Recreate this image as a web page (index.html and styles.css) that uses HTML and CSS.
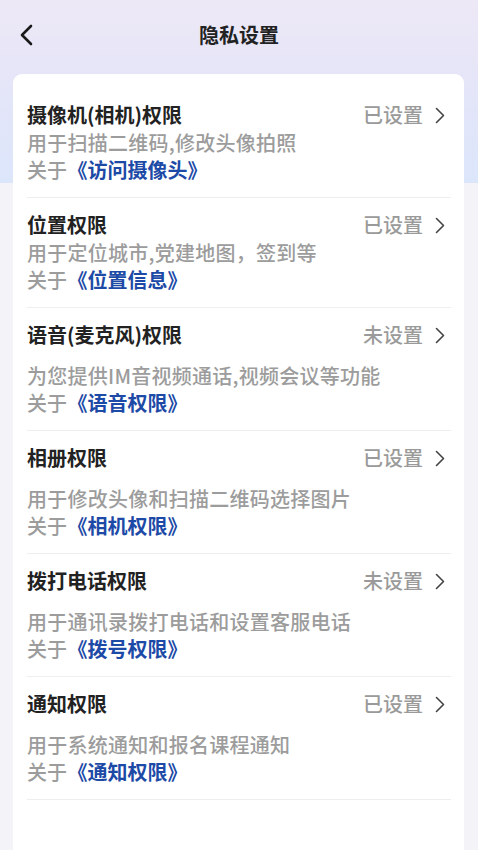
FILE: index.html
```html
<!DOCTYPE html>
<html lang="zh">
<head>
<meta charset="utf-8">
<link rel="stylesheet" href="styles.css">
</head>
<body>
<div class="page">
  <div class="topbg"></div>
  <header class="nav">
    <span class="back"><svg width="14" height="22" viewBox="0 0 14 22"><path d="M12 2 L3 11 L12 20" fill="none" stroke="#1a1a1a" stroke-width="2.6" stroke-linecap="round" stroke-linejoin="round"/></svg></span>
    <h1 class="nav-title">隐私设置</h1>
  </header>
  <main class="card">
    <div class="row">
      <div class="row-head"><span class="title">摄像机(相机)权限</span><span class="status">已设置<svg class="chev" width="10" height="17" viewBox="0 0 10 17"><path d="M1.5 1.5 L8.5 8.5 L1.5 15.5" fill="none" stroke="#444" stroke-width="1.6" stroke-linecap="round" stroke-linejoin="round"/></svg></span></div>
      <div class="desc">用于扫描二维码,修改头像拍照</div>
      <div class="about">关于 <span class="link">《访问摄像头》</span></div>
    </div>
    <div class="row">
      <div class="row-head"><span class="title">位置权限</span><span class="status">已设置<svg class="chev" width="10" height="17" viewBox="0 0 10 17"><path d="M1.5 1.5 L8.5 8.5 L1.5 15.5" fill="none" stroke="#444" stroke-width="1.6" stroke-linecap="round" stroke-linejoin="round"/></svg></span></div>
      <div class="desc">用于定位城市,党建地图，签到等</div>
      <div class="about">关于 <span class="link">《位置信息》</span></div>
    </div>
    <div class="row wide">
      <div class="row-head"><span class="title">语音(麦克风)权限</span><span class="status">未设置<svg class="chev" width="10" height="17" viewBox="0 0 10 17"><path d="M1.5 1.5 L8.5 8.5 L1.5 15.5" fill="none" stroke="#444" stroke-width="1.6" stroke-linecap="round" stroke-linejoin="round"/></svg></span></div>
      <div class="desc">为您提供IM音视频通话,视频会议等功能</div>
      <div class="about">关于 <span class="link">《语音权限》</span></div>
    </div>
    <div class="row wide">
      <div class="row-head"><span class="title">相册权限</span><span class="status">已设置<svg class="chev" width="10" height="17" viewBox="0 0 10 17"><path d="M1.5 1.5 L8.5 8.5 L1.5 15.5" fill="none" stroke="#444" stroke-width="1.6" stroke-linecap="round" stroke-linejoin="round"/></svg></span></div>
      <div class="desc">用于修改头像和扫描二维码选择图片</div>
      <div class="about">关于 <span class="link">《相机权限》</span></div>
    </div>
    <div class="row wide">
      <div class="row-head"><span class="title">拨打电话权限</span><span class="status">未设置<svg class="chev" width="10" height="17" viewBox="0 0 10 17"><path d="M1.5 1.5 L8.5 8.5 L1.5 15.5" fill="none" stroke="#444" stroke-width="1.6" stroke-linecap="round" stroke-linejoin="round"/></svg></span></div>
      <div class="desc">用于通讯录拨打电话和设置客服电话</div>
      <div class="about">关于 <span class="link">《拨号权限》</span></div>
    </div>
    <div class="row wide">
      <div class="row-head"><span class="title">通知权限</span><span class="status">已设置<svg class="chev" width="10" height="17" viewBox="0 0 10 17"><path d="M1.5 1.5 L8.5 8.5 L1.5 15.5" fill="none" stroke="#444" stroke-width="1.6" stroke-linecap="round" stroke-linejoin="round"/></svg></span></div>
      <div class="desc">用于系统通知和报名课程通知</div>
      <div class="about">关于 <span class="link">《通知权限》</span></div>
    </div>
  </main>
</div>
</body>
</html>
```
FILE: styles.css
```css
* { box-sizing: border-box; margin: 0; padding: 0; }
html, body { width: 478px; height: 850px; overflow: hidden; }
body {
  background: #f3f3f8;
  font-family: "Noto Sans CJK SC", "Noto Sans", sans-serif;
}
.page { position: relative; width: 478px; min-height: 850px; }
.topbg {
  position: absolute;
  left: 0; top: 0; right: 0;
  height: 183px;
  background: linear-gradient(180deg, #ede8f6 0%, #e4e5f8 50%, #dce6fb 100%);
}
.nav {
  position: relative;
  height: 74px;
  display: flex;
  align-items: center;
  justify-content: center;
  padding-bottom: 4px;
}
.back {
  position: absolute;
  left: 19px;
  top: 24px;
  display: flex;
}
.nav-title {
  font-size: 20px;
  font-weight: 700;
  color: #222;
  line-height: 28px;
}
.card {
  position: relative;
  margin: 0 14px 0 13px;
  background: #fff;
  border-radius: 9px 9px 0 0;
  padding: 14px 13px 0 14px;
  min-height: 776px;
}
.row {
  padding: 13px 0 14px;
  border-bottom: 1px solid #eeeeee;
}
.row-head {
  display: flex;
  justify-content: space-between;
  align-items: center;
  height: 28px;
}
.title {
  font-size: 20px;
  font-weight: 700;
  color: #222;
  line-height: 28px;
}
.status {
  display: flex;
  align-items: center;
  font-size: 20px;
  font-weight: 500;
  color: #9a9a9a;
  line-height: 28px;
}
.chev { margin-left: 12px; margin-right: 6px; }
.desc {
  font-size: 20px;
  font-weight: 500;
  color: #9c9c9c;
  line-height: 27px;
  letter-spacing: 0.25px;
}
.row.wide .desc { margin-top: 13px; }
.about {
  font-size: 20px;
  font-weight: 500;
  color: #9c9c9c;
  line-height: 27px;
}
.link {
  color: #1c4aa6;
  font-weight: 700;
  margin-left: -4px;
}
```
